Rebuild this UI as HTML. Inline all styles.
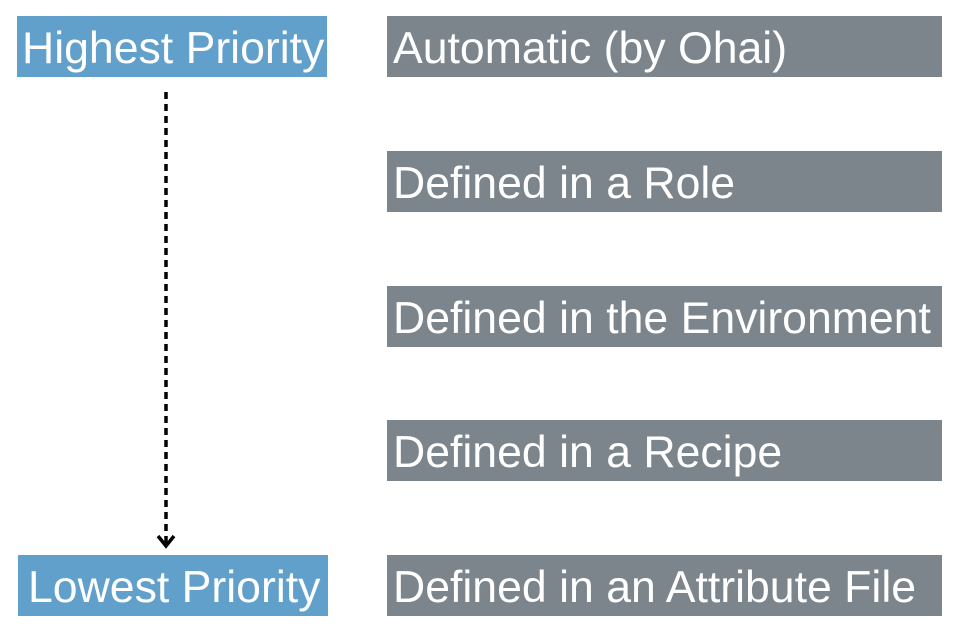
<!DOCTYPE html>
<html><head><style>
body{margin:0;width:959px;height:632px;background:#fff;position:relative;overflow:hidden;font-family:"Liberation Sans",Arial,sans-serif}
.b{position:absolute;height:61px;color:#fff;font-size:44.6px;line-height:66px;white-space:nowrap;box-sizing:border-box;overflow:hidden}
.blue{background:#62a0cc;width:310px;padding-left:5px}
.gray{background:#7b858b;left:387px;width:555px;padding-left:6px}
</style></head><body>
<div class="b blue" style="left:17px;top:16px">Highest Priority</div>
<div class="b blue" style="left:18px;top:555px;padding-left:10px">Lowest Priority</div>
<div class="b gray" style="top:16px">Automatic (by Ohai)</div>
<div class="b gray" style="top:151px">Defined in a Role</div>
<div class="b gray" style="top:286px">Defined in the Environment</div>
<div class="b gray" style="top:420px">Defined in a Recipe</div>
<div class="b gray" style="top:555px">Defined in an Attribute File</div>
<svg style="position:absolute;left:0;top:0" width="959" height="632">
<line x1="166" y1="92" x2="166" y2="544" stroke="#000" stroke-width="3.5" stroke-dasharray="7,5"/>
<polyline points="158,536 166,546 174,536" fill="none" stroke="#000" stroke-width="3.5"/>
</svg>
</body></html>
